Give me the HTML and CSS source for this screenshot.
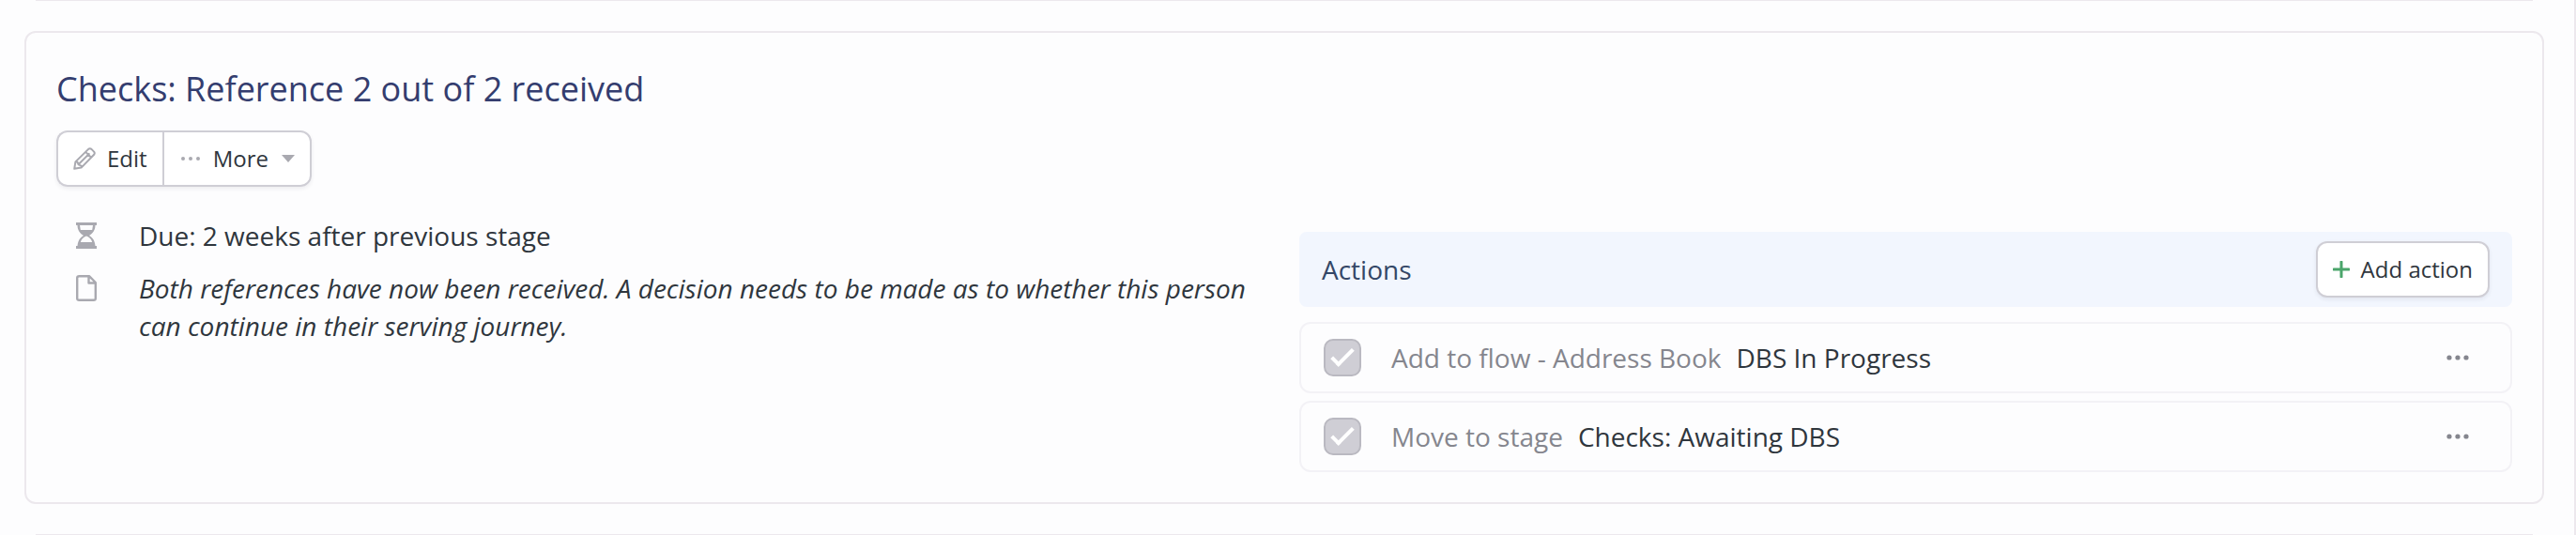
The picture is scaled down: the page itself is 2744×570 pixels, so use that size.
FILE: index.html
```html
<!DOCTYPE html>
<html lang="en">
<head>
    <meta charset="UTF-8">
    <title>Checks</title>
    <link rel="stylesheet" href="styles.css">
</head>
<body>
<div class="flow">
    <div class="stage_edge"></div>
    <section class="stage">
        <h2 class="stage_title">Checks: Reference 2 out of 2 received</h2>
        <div class="btn_group">
            <button type="button" class="btn">
                <svg class="icon_pencil" viewBox="0 0 24 24"><path d="M1.200 22.800l1.200-7.400L16.200 1.900q1.600-1.300 3.200 0l2.700 2.700q1.300 1.600 0 3.200L8.600 21.600zM2.400 15.400l2 0 1.200 3 3 1.200v2M6 17.800L17.400 6.400M13.200 4.900l5.900 5.900"/></svg>
                Edit
            </button>
            <button type="button" class="btn">
                <svg class="icon_dots" viewBox="0 0 24 8"><circle cx="4" cy="4" r="2"/><circle cx="12" cy="4" r="2"/><circle cx="20" cy="4" r="2"/></svg>
                More
                <span class="caret"></span>
            </button>
        </div>
        <div class="cols">
            <ul class="info">
                <li>
                    <svg class="icon_info" viewBox="-1 0 24 30"><path class="fill" d="M0 1h22v3h-1.500C20.500 9 18 12.500 14 15c4 2.500 6 5.500 6.500 11H22v3H0v-3h1.500C2 20.500 4 17.500 8 15 4 12.500 1.500 9 1.500 4H0zM4 4l.8 5h12.400L18 4zM4.800 22h12.400c-1-3.500-3.200-5.500-6.200-6.500C8 16.500 5.800 18.500 4.800 22z"/></svg>
                    <span>Due: 2 weeks after previous stage</span>
                </li>
                <li>
                    <svg class="icon_info" viewBox="-1 0 24 30"><path class="line" d="M3.500 2.200H14l6.800 6.800V26q0 1.800-2 1.800H3.200q-2 0-2-1.800V4q0-1.800 2.300-1.800zM13.500 2.200v7.300h7.300"/></svg>
                    <em>Both references have now been received. A decision needs to be made as to whether this person can continue in their serving journey.</em>
                </li>
            </ul>
            <div class="actions">
                <div class="actions_head">
                    <h3>Actions</h3>
                    <button type="button" class="btn btn_add">
                        <svg class="icon_plus" viewBox="0 0 18 18"><path d="M9 1v16M1 9h16"/></svg>
                        Add action
                    </button>
                </div>
                <ul class="action_list">
                    <li>
                        <input type="checkbox" id="action1" checked disabled>
                        <label for="action1"><span class="type">Add to flow - Address Book</span><span>DBS In Progress</span></label>
                        <button type="button" class="more" aria-label="More"><svg viewBox="0 0 24 8"><circle cx="3" cy="4" r="2.600"/><circle cx="12" cy="4" r="2.600"/><circle cx="21" cy="4" r="2.600"/></svg></button>
                    </li>
                    <li>
                        <input type="checkbox" id="action2" checked disabled>
                        <label for="action2"><span class="type">Move to stage</span><span>Checks: Awaiting DBS</span></label>
                        <button type="button" class="more" aria-label="More"><svg viewBox="0 0 24 8"><circle cx="3" cy="4" r="2.600"/><circle cx="12" cy="4" r="2.600"/><circle cx="21" cy="4" r="2.600"/></svg></button>
                    </li>
                </ul>
            </div>
        </div>
    </section>
    <div class="stage_edge"></div>
</div>
</body>
</html>
```
FILE: styles.css
```css
*{margin:0;padding:0;box-sizing:border-box;}
ul{list-style:none;}
body{background:#fdfdfe;color:#2f363d;font:28px/40px "Open Sans","Noto Sans",sans-serif;}
button{font:inherit;color:inherit;cursor:pointer;}
svg{display:block;flex:none;}
.flow{display:flex;flex-direction:column;gap:32px;padding:0 32px 0 26px;border-right:2px solid #ece8ed;}
.stage_edge{height:1px;margin:0 12px;background:#ece8ed;}
.stage{padding:32px;border:2px solid #ece8ed;border-radius:12px;}
.stage_title{margin-bottom:16px;color:#343d6f;font-size:36px;line-height:56px;font-weight:400;}

/* buttons */
.btn{display:flex;align-items:center;height:60px;padding:0 16px;border:2px solid #cfced5;border-radius:12px;background:#fff;box-shadow:0 2px 4px rgba(40,40,60,0.08);font-size:24px;white-space:nowrap;}
.btn_group{display:inline-flex;vertical-align:top;border-radius:12px;box-shadow:0 2px 4px rgba(40,40,60,0.08);}
.btn_group .btn{box-shadow:none;}
.btn_group .btn:first-child{border-radius:12px 0 0 12px;border-right:0;}
.btn_group .btn:last-child{border-radius:0 12px 12px 0;}
.icon_pencil{width:24px;height:24px;margin-right:12px;fill:none;stroke:#a9a9b0;stroke-width:2;stroke-linejoin:round;}
.icon_dots{width:24px;height:8px;margin-right:12px;fill:#a9a9b0;}
.icon_plus{width:18px;height:18px;margin-right:12px;fill:none;stroke:#4ba56b;stroke-width:3;stroke-linecap:round;}
.caret{margin-left:14px;border:7px solid transparent;border-top:8px solid #a9a9b0;border-bottom:0;}

/* columns */
.cols{display:grid;grid-template-columns:1fr 1fr;gap:32px;margin-top:32px;}
.info li{display:flex;gap:44px;padding-left:20px;margin-bottom:16px;}
.icon_info{width:24px;height:30px;margin-top:5px;}
.fill{fill:#a9a9b0;fill-rule:evenodd;}
.line{fill:none;stroke:#a9a9b0;stroke-width:2.4;stroke-linejoin:round;}
.actions{margin-top:16px;}
.actions_head{display:flex;align-items:center;justify-content:space-between;height:80px;padding:0 24px;border-radius:8px;background:#f2f6fe;}
.actions_head h3{color:#344767;font-size:28px;font-weight:500;}
.action_list{display:flex;flex-direction:column;gap:8px;margin-top:16px;}
.action_list li{display:flex;align-items:center;height:76px;padding:0 44px 0 24px;border:2px solid #f3f2f6;border-radius:12px;}
.action_list label{display:flex;flex:1;gap:16px;}
.type{color:#85868e;}
.more{border:0;background:none;}
.more svg{width:24px;height:8px;fill:#85868e;}
input{appearance:none;width:40px;height:40px;margin-right:32px;border:2px solid #bab9c1;border-radius:10px;background:#cfced5;display:grid;place-items:center;}
input:checked::before{content:"";width:8px;height:20px;margin-top:-6px;border:solid #fff;border-width:0 4px 4px 0;transform:rotate(45deg);}
```
